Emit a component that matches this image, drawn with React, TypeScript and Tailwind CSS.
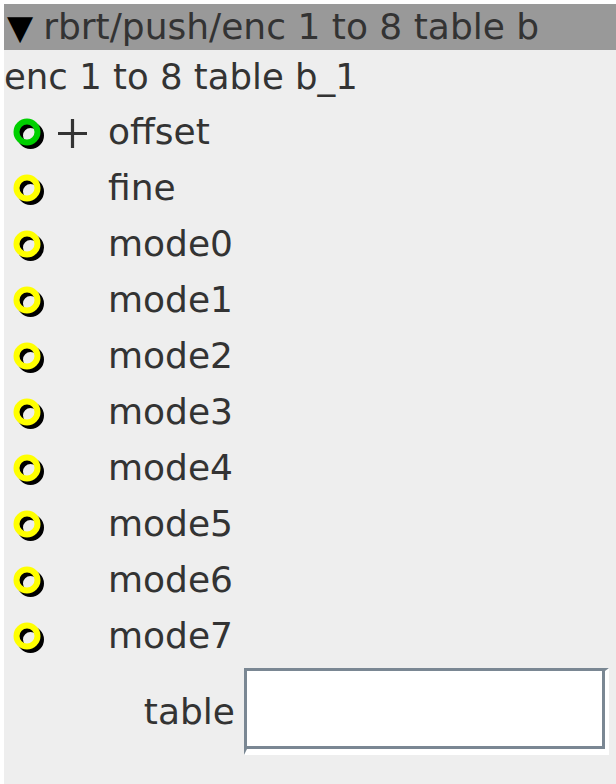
import React from 'react'

const rows = ['offset', 'fine', 'mode0', 'mode1', 'mode2', 'mode3', 'mode4', 'mode5', 'mode6', 'mode7']

const Ring = ({ color }: { color: string }) => (
  <svg width="40" height="40" viewBox="0 0 40 40" className="shrink-0">
    <circle cx="17.5" cy="17.5" r="10.5" fill="none" stroke="#000" strokeWidth="6" />
    <circle cx="14" cy="14" r="10.5" fill="none" stroke={color} strokeWidth="6" />
  </svg>
)

const Plus = () => (
  <svg width="31" height="31" viewBox="0 0 31 31" className="ml-[4px] mt-[2px]">
    <path d="M15.5 1v29M1 15.5h29" stroke="#333" strokeWidth="3.2" fill="none" />
  </svg>
)

const App = () => {
  return (
    <div className="pl-1 pt-1 h-[784px] bg-white overflow-hidden font-['DejaVu_Sans',sans-serif] text-[36px] text-[#333]">
      <div className="flex flex-col h-full bg-[#eeeeee]">
        <div className="flex items-center h-[46px] pl-[3px] bg-[#999999] whitespace-nowrap">
          <span className="text-black text-[34px] mr-[10px] leading-none">▼</span>
          <span className="leading-none">rbrt/push/enc 1 to 8 table b</span>
        </div>
        <div className="flex items-center h-[54px] whitespace-nowrap text-[35.5px]">enc 1 to 8 table b_1</div>
        {rows.map((name, i) => (
          <div key={name} className="flex items-center h-14 pl-[9px]">
            <div className="shrink-0 mt-[11px]">
              <Ring color={i === 0 ? '#00d000' : '#ffff00'} />
            </div>
            <div className="w-[55px] shrink-0 flex items-center">{i === 0 && <Plus />}</div>
            <span className="leading-none">{name}</span>
          </div>
        ))}
        <div className="flex items-center mt-1">
          <span className="w-[231px] text-right">table</span>
          <div className="ml-[9px] w-[365px] h-[87px] border-t-[3px] border-l-[3px] border-b-[6px] border-r-[4px] border-t-[#7a8793] border-l-[#7a8793] border-b-white border-r-white">
            <div className="h-full bg-white border-b-[3px] border-r-[3px] border-[#7a8793]" />
          </div>
        </div>
      </div>
    </div>
  )
}

export default App
